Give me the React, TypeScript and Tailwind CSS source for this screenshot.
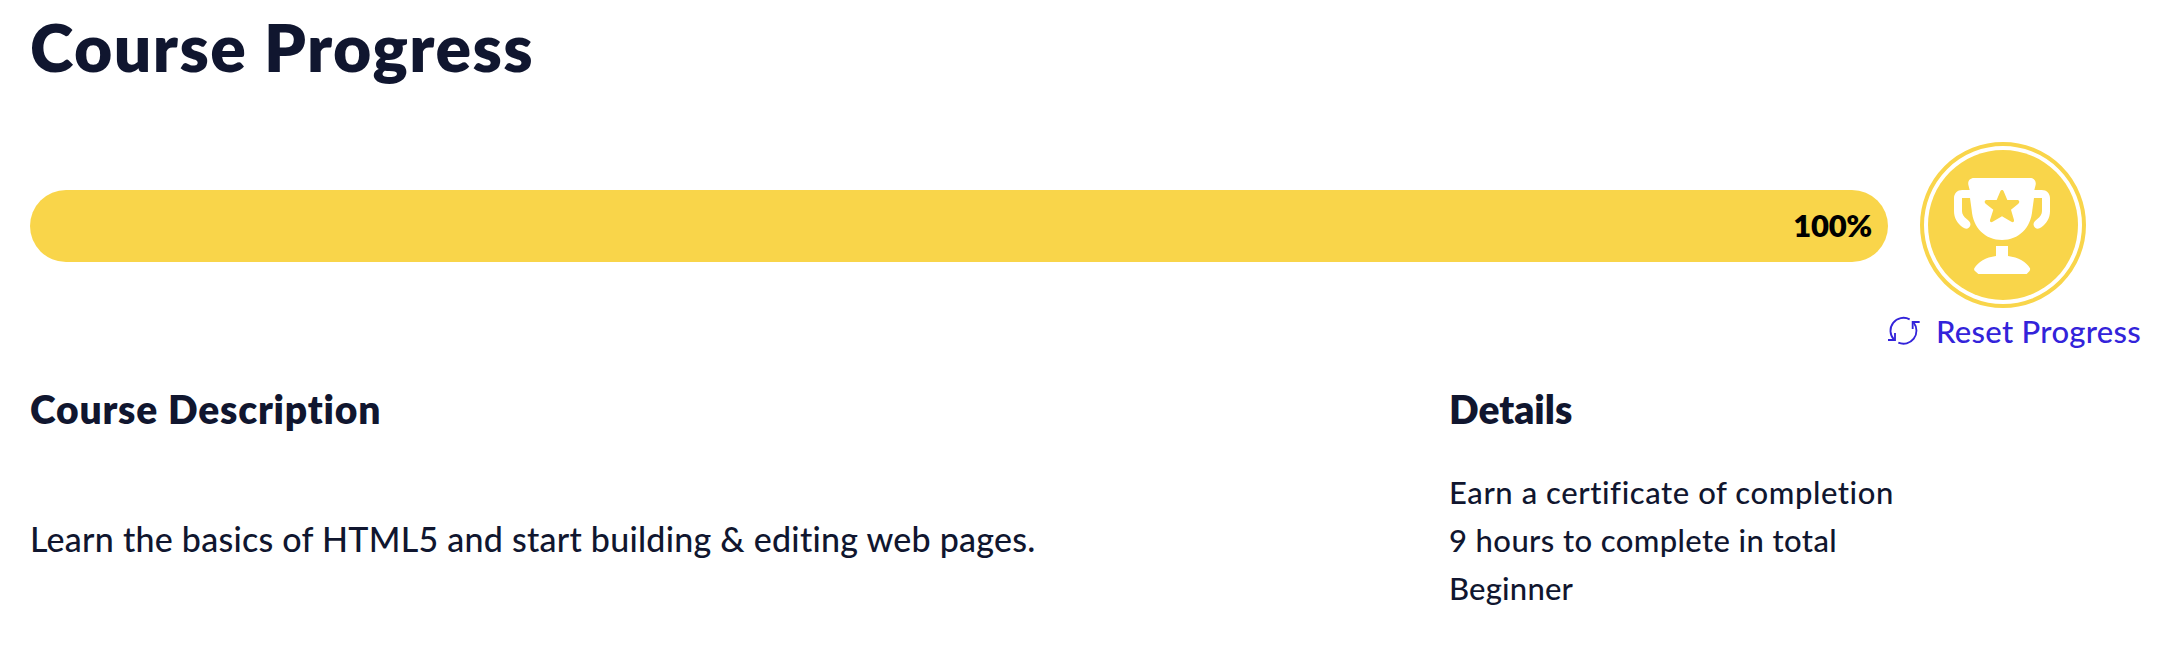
import React from "react";

function TrophyBadge() {
  return (
    <svg className="h-[166px] w-[166px] shrink-0" viewBox="60 36 498 498" fill="none" aria-hidden="true">
      <circle cx="309" cy="285" r="243" stroke="#F9D54A" strokeWidth="12" />
      <circle cx="309" cy="285" r="225" fill="#F9D54A" />
      <path
        fill="#fff"
        d="M222 144H390C402 144 409 153 407 164L403 180H425C440 180 450 190 450 205V243C450 264 440 280 424 292C415 299 404 297 401 286C399 278 405 273 412 267C421 260 426 253 426 243V204H402L397 240C393 294 356 330 306 330C256 330 219 294 215 240L210 204H186V243C186 253 191 260 200 267C207 273 213 278 211 286C208 297 197 299 188 292C172 280 162 264 162 243V205C162 190 172 180 187 180H209L205 164C203 153 210 144 222 144Z"
      />
      <path
        fill="#F9D54A"
        d="M301 184C303 179 309 179 311 184L322 210H352C358 210 360 217 355 221L333 239L342 270C343 276 339 278 334 275L306 259L278 275C273 278 269 276 270 270L280 239L257 221C252 217 254 210 260 210H290Z"
      />
      <path
        fill="#fff"
        d="M288 348H324V378C355 382 380 396 390 415C391 418 390 421 388 424L380 432H235L224 422C222 420 222 417 223 415C234 396 257 382 288 378Z"
      />
    </svg>
  );
}

function ResetIcon() {
  return (
    <svg className="h-[30px] w-[32px]" viewBox="24 21 96 90" fill="none" stroke="currentColor" strokeWidth="5.5" aria-hidden="true">
      <path d="M89 31A39 39 0 0 0 42 92" />
      <path d="M24 93H45V72" />
      <path d="M55 101A39 39 0 0 0 101 41" />
      <path d="M119 39H98V60" />
    </svg>
  );
}

export default function App() {
  return (
    <main className="h-[650px] w-[2174px] overflow-hidden bg-white pt-[7px] pl-[30px] font-['Lato',sans-serif] text-[#10162F]">
      <h1 className="text-[66px] leading-[80px] font-extrabold tracking-[1.45px]">Course Progress</h1>

      <div className="mt-[55px] flex items-center gap-8">
        <div className="mt-[2px] flex h-[72px] w-[1858px] items-center justify-end rounded-full bg-[#F9D54A] pr-4 pb-[2px]">
          <span className="text-[31px] leading-[38px] font-extrabold tracking-[-0.3px] text-black">100%</span>
        </div>
        <TrophyBadge />
      </div>

      <button className="mt-[3px] ml-[1858px] flex h-10 items-center gap-4 text-[#3323DA]">
        <ResetIcon />
        <span className="text-[31px] leading-[40px] font-medium tracking-[0.3px]">Reset Progress</span>
      </button>

      <div className="mt-[34px] grid grid-cols-[1419px_1fr]">
        <section>
          <h2 className="text-[39px] leading-[48px] font-extrabold tracking-[0.8px]">Course Description</h2>
          <p className="mt-[82px] text-[34px] leading-[48px] font-medium tracking-[0.25px]">
            Learn the basics of HTML5 and start building &amp; editing web pages.
          </p>
        </section>
        <section>
          <h2 className="text-[39px] leading-[48px] font-extrabold">Details</h2>
          <ul className="mt-[35px] text-[31px] leading-[48px] font-medium">
            <li className="tracking-[0.58px]">Earn a certificate of completion</li>
            <li className="tracking-[0.4px]">9 hours to complete in total</li>
            <li className="tracking-[0.2px]">Beginner</li>
          </ul>
        </section>
      </div>
    </main>
  );
}
